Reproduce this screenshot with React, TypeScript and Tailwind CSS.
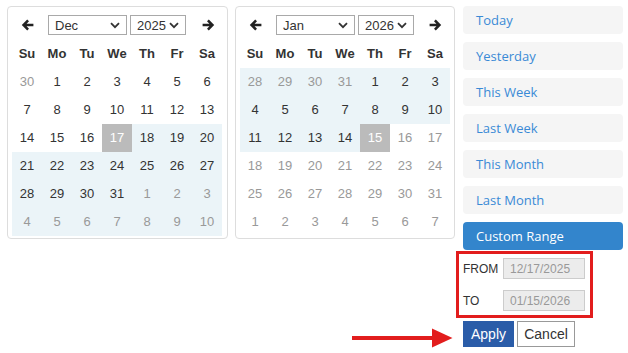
import React from 'react';

type Day = { n: number; off?: boolean; range?: boolean; sel?: boolean };

const names = ['Su', 'Mo', 'Tu', 'We', 'Th', 'Fr', 'Sa'];

function buildDec(): Day[] {
  const days: Day[] = [{ n: 30, off: true }];
  for (let i = 1; i <= 31; i++) days.push({ n: i, range: i >= 17, sel: i === 17 });
  for (let i = 1; i <= 10; i++) days.push({ n: i, off: true, range: true });
  return days;
}

function buildJan(): Day[] {
  const days: Day[] = [28, 29, 30, 31].map((n) => ({ n, off: true, range: true }));
  for (let i = 1; i <= 31; i++) days.push({ n: i, off: i > 15, range: i <= 15, sel: i === 15 });
  for (let i = 1; i <= 7; i++) days.push({ n: i, off: true });
  return days;
}

function Arrow({ dir }: { dir: 'left' | 'right' }) {
  return (
    <svg width="13" height="12" viewBox="0 0 13 12" className={dir === 'right' ? 'rotate-180' : ''}>
      <path d="M6.2 0.6 L0.8 6 L6.2 11.4 L8 9.7 L5.6 7.3 H12.4 V4.7 H5.6 L8 2.3 Z" fill="#222" />
    </svg>
  );
}

function Select({ value, width }: { value: string; width: string }) {
  return (
    <div className={`flex h-[20px] items-center justify-between border border-[#a9a9a9] bg-white pl-[6px] pr-[6px] text-[13px] leading-none text-[#333] ${width}`}>
      <span>{value}</span>
      <svg width="10" height="7" viewBox="0 0 10 7">
        <path d="M1 1.2 L5 5.2 L9 1.2" fill="none" stroke="#333" strokeWidth="1.8" />
      </svg>
    </div>
  );
}

function Calendar({ month, year, days, width }: { month: string; year: string; days: Day[]; width: string }) {
  return (
    <div className={`rounded-[4px] border border-[#ddd] bg-white px-[4px] pb-[2px] pt-[3px] ${width}`}>
      <div className="flex h-[30px] items-center">
        <div className="flex w-[30px] justify-center"><Arrow dir="left" /></div>
        <div className="ml-[6px]"><Select value={month} width="w-[79px]" /></div>
        <div className="ml-[3px]"><Select value={year} width="w-[56px]" /></div>
        <div className="ml-auto flex w-[30px] justify-center"><Arrow dir="right" /></div>
      </div>
      <div className="grid w-[210px] grid-cols-7">
        {names.map((d) => (
          <div key={d} className="flex h-[28px] items-center justify-center text-[13px] font-bold text-[#333]">{d}</div>
        ))}
        {days.map((d, i) => (
          <div
            key={i}
            className={`flex h-[28px] items-center justify-center text-[13px] ${
              d.sel ? 'bg-[#bbbbbb] text-white' : d.range ? 'bg-[#ebf4f8]' : 'bg-white'
            } ${d.sel ? '' : d.off ? 'text-[#999]' : 'text-[#333]'}`}
          >
            {d.n}
          </div>
        ))}
      </div>
    </div>
  );
}

const ranges = ['Today', 'Yesterday', 'This Week', 'Last Week', 'This Month', 'Last Month'];

export default function App() {
  return (
    <div className="relative h-[353px] w-[628px] overflow-hidden bg-white font-['Liberation_Sans',Arial,sans-serif]">
      <div className="flex items-start pl-[7px] pt-[6px]">
        <Calendar month="Dec" year="2025" days={buildDec()} width="w-[221px]" />
        <div className="ml-[7px]">
          <Calendar month="Jan" year="2026" days={buildJan()} width="w-[220px]" />
        </div>
        <div className="ml-[8px] w-[160px]">
          <div className="flex flex-col gap-[8px] font-['Open_Sans',sans-serif] text-[13px]">
            {ranges.map((r) => (
              <div key={r} className="flex h-[28px] items-center rounded-[4px] bg-[#f5f5f5] pl-[13px] pt-[1px] text-[#3a8ad6]">
                {r}
              </div>
            ))}
            <div className="flex h-[28px] items-center rounded-[4px] bg-[#3385cc] pl-[13px] pt-[1px] text-white">Custom Range</div>
          </div>
          <div className="ml-[-7px] mt-[1px] w-[137px] border-[3px] border-[#e21d1d] px-[4px] py-[4px]">
            <div className="flex items-center">
              <span className="w-[40px] text-[12px] text-[#333]">FROM</span>
              <div className="flex h-[21px] w-[82px] items-center border border-[#ccc] bg-[#ececec] pl-[6px] text-[12px] text-[#999]">12/17/2025</div>
            </div>
            <div className="mt-[11px] flex items-center">
              <span className="w-[40px] text-[12px] text-[#333]">TO</span>
              <div className="flex h-[21px] w-[82px] items-center border border-[#ccc] bg-[#ececec] pl-[6px] text-[12px] text-[#999]">01/15/2026</div>
            </div>
          </div>
          <div className="mt-[3px] flex gap-[3px]">
            <button className="h-[26px] w-[51px] bg-[#2a5ca8] text-[14px] text-white">Apply</button>
            <button className="h-[26px] w-[58px] border border-[#999] bg-white text-[14px] text-[#333]">Cancel</button>
          </div>
        </div>
      </div>
      <svg className="absolute left-[352px] top-[328px]" width="101" height="20" viewBox="0 0 101 20">
        <rect x="0" y="8" width="82" height="4" fill="#e21d1d" />
        <path d="M80 0.5 L100.5 10 L80 19.5 Z" fill="#e21d1d" />
      </svg>
    </div>
  );
}
